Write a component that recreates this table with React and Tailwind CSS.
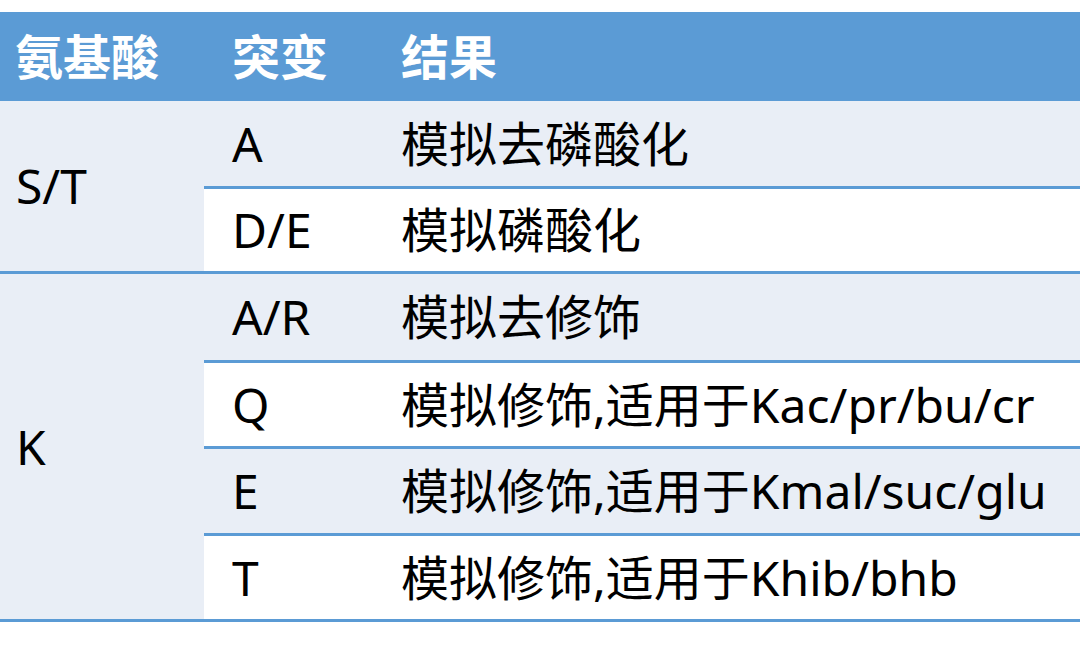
const FONT = "font-['Noto_Sans','Noto_Sans_CJK_SC',sans-serif]";

const groups = [
  {
    aa: 'S/T',
    rows: [
      { mut: 'A', res: '模拟去磷酸化', h: 'h-[85px]' },
      { mut: 'D/E', res: '模拟磷酸化', h: 'h-[85px]' },
    ],
  },
  {
    aa: 'K',
    rows: [
      { mut: 'A/R', res: '模拟去修饰', h: 'h-[86px]' },
      { mut: 'Q', res: '模拟修饰,适用于Kac/pr/bu/cr', h: 'h-[86px]' },
      { mut: 'E', res: '模拟修饰,适用于Kmal/suc/glu', h: 'h-[87px]' },
      { mut: 'T', res: '模拟修饰,适用于Khib/bhb', h: 'h-[86px]' },
    ],
  },
];

export default function App() {
  return (
    <div className={`w-[1080px] h-[655px] bg-white pt-[12px] text-black text-[48px] leading-none ${FONT}`}>
      {/* header */}
      <div className="h-[89px] bg-[#5b9bd5] flex items-center text-white font-bold">
        <div className="w-[204px] pl-[15px]">氨基酸</div>
        <div className="w-[197px] pl-[28px]">突变</div>
        <div>结果</div>
      </div>

      {groups.map((g) => (
        <div key={g.aa} className="flex border-b-[3px] border-[#5b9bd5]">
          <div className="w-[204px] bg-[#e9eef6] flex items-center pl-[16px]">{g.aa}</div>
          <div className="flex-1 flex flex-col">
            {g.rows.map((r, i) => (
              <div
                key={r.mut}
                className={`${r.h} flex items-center ${i % 2 === 0 ? 'bg-[#e9eef6]' : 'bg-white'} ${i > 0 ? 'border-t-[3px] border-[#5b9bd5]' : ''}`}
              >
                <div className="w-[197px] pl-[28px]">{r.mut}</div>
                <div className="whitespace-nowrap">{r.res}</div>
              </div>
            ))}
          </div>
        </div>
      ))}
    </div>
  );
}
